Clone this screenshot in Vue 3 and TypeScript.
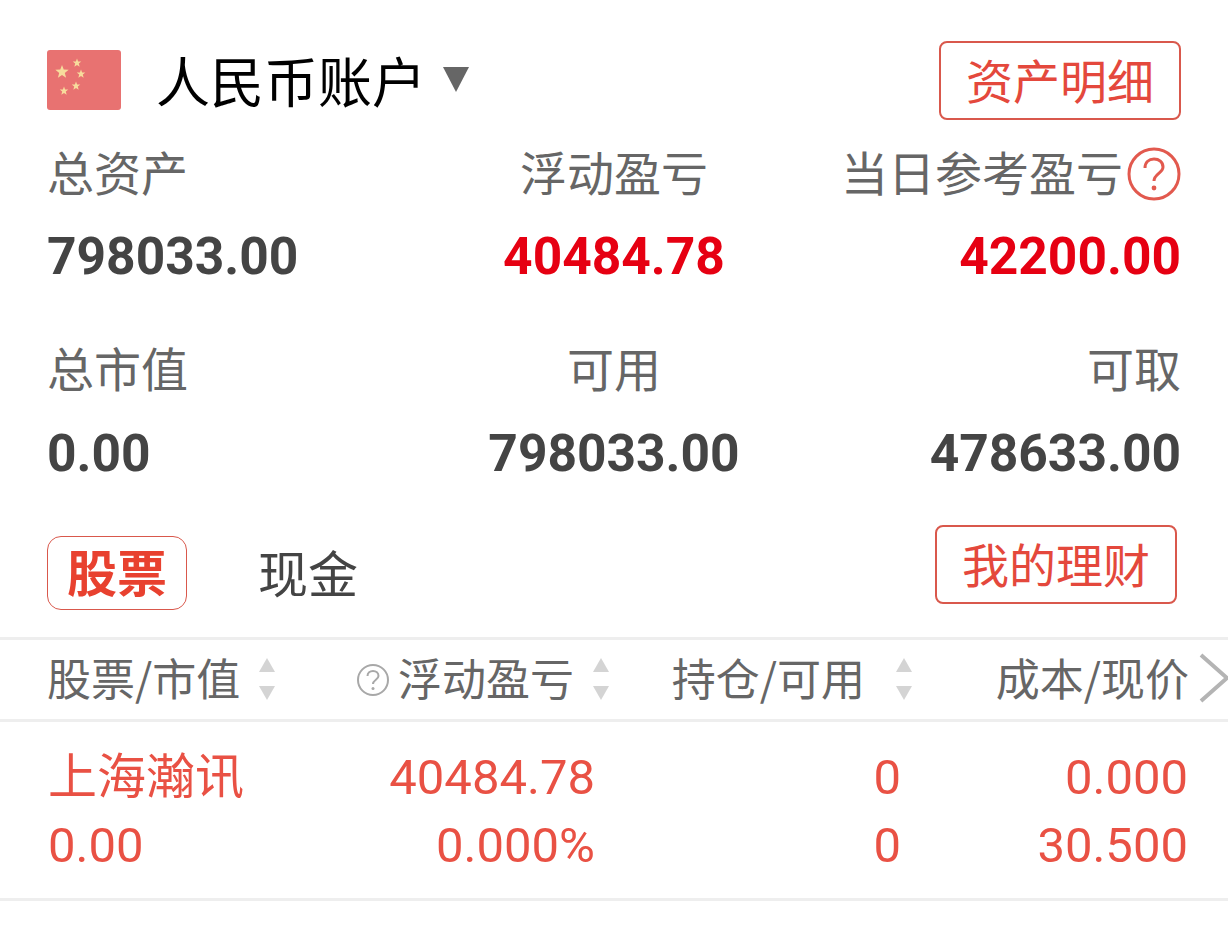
<script setup lang="ts">
const stars = [
  { x: 15, y: 22, r: 7 },
  { x: 30, y: 13, r: 4.5 },
  { x: 34, y: 24, r: 4.5 },
  { x: 29, y: 36, r: 4.5 },
  { x: 17, y: 41, r: 4.5 }
]

function starPoints(cx: number, cy: number, r: number): string {
  const pts: string[] = []
  for (let i = 0; i < 10; i++) {
    const rad = i % 2 === 0 ? r : r * 0.42
    const a = -Math.PI / 2 + (i * Math.PI) / 5
    pts.push(`${(cx + rad * Math.cos(a)).toFixed(2)},${(cy + rad * Math.sin(a)).toFixed(2)}`)
  }
  return pts.join(' ')
}

const summary = [
  { label: '总资产', value: '798033.00', align: 'left' },
  { label: '浮动盈亏', value: '40484.78', align: 'center', red: true },
  { label: '当日参考盈亏', value: '42200.00', align: 'right', red: true, help: true },
  { label: '总市值', value: '0.00', align: 'left' },
  { label: '可用', value: '798033.00', align: 'center' },
  { label: '可取', value: '478633.00', align: 'right' }
]

const columns = [
  { label: '股票/市值', sort: true },
  { label: '浮动盈亏', sort: true, help: true },
  { label: '持仓/可用', sort: true },
  { label: '成本/现价', sort: false }
]

const rows = [
  ['上海瀚讯', '40484.78', '0', '0.000'],
  ['0.00', '0.000%', '0', '30.500']
]
</script>

<template>
  <div class="page">
    <div class="account">
      <div class="account-left">
        <svg class="flag" width="74" height="60" viewBox="0 0 74 60">
          <rect width="74" height="60" rx="3" fill="#e87271" />
          <polygon v-for="(s, i) in stars" :key="i" :points="starPoints(s.x, s.y, s.r)" fill="#f7dc9c" />
        </svg>
        <span class="account-name">人民币账户</span>
        <svg class="caret" width="28" height="27" viewBox="0 0 28 27">
          <path d="M1 1H27L14 26Z" fill="#666" />
        </svg>
      </div>
      <a class="outline-btn">资产明细</a>
    </div>

    <div class="summary">
      <div v-for="item in summary" :key="item.label" class="cell" :class="item.align">
        <div class="cell-label">
          <span>{{ item.label }}</span>
          <svg v-if="item.help" class="help" width="54" height="54" viewBox="0 0 54 54">
            <circle cx="27" cy="27" r="25" fill="none" stroke="#e2594e" stroke-width="3" />
            <path d="M18 21C18 15 22 12 27 12C32 12 36 15 36 20C36 26 27 27 27 34" fill="none" stroke="#e2594e" stroke-width="3" />
            <circle cx="27" cy="41" r="2.4" fill="#e2594e" />
          </svg>
        </div>
        <div class="cell-value" :class="{ red: item.red }">{{ item.value }}</div>
      </div>
    </div>

    <div class="tabs">
      <div class="tab-list">
        <span class="tab active">股票</span>
        <span class="tab">现金</span>
      </div>
      <a class="outline-btn">我的理财</a>
    </div>

    <div class="table-head">
      <div v-for="col in columns" :key="col.label" class="head-cell">
        <svg v-if="col.help" class="help-small" width="34" height="34" viewBox="0 0 34 34">
          <circle cx="17" cy="17" r="15" fill="none" stroke="#a8a8a8" stroke-width="2" />
          <path d="M11.500 13C11.500 10 14 8 17 8C20 8 22.500 10 22.500 13C22.500 16.500 17 17 17 21" fill="none" stroke="#a8a8a8" stroke-width="2" />
          <circle cx="17" cy="25.500" r="1.500" fill="#a8a8a8" />
        </svg>
        <span>{{ col.label }}</span>
        <svg v-if="col.sort" class="sort" width="18" height="42" viewBox="0 0 18 42">
          <path d="M9 0L17 14H1Z" fill="#d4d4d4" />
          <path d="M1 28H17L9 42Z" fill="#d4d4d4" />
        </svg>
      </div>
      <svg class="more" width="30" height="50" viewBox="0 0 30 50">
        <path d="M2 2L28 25L2 48" fill="none" stroke="#b4b4b4" stroke-width="4" />
      </svg>
    </div>

    <div class="table-body">
      <div v-for="(row, i) in rows" :key="i" class="table-row">
        <span v-for="(text, j) in row" :key="j" class="table-cell">{{ text }}</span>
      </div>
    </div>
  </div>
</template>

<style>
html,
body {
  margin: 0;
  background: #fff;
}
</style>

<style scoped>
.page {
  width: 1228px;
  height: 928px;
  overflow: hidden;
  background: #fff;
  padding-top: 41px;
  box-sizing: border-box;
  font-family: "Noto Sans CJK SC", "Noto Sans", sans-serif;
}
.account {
  display: flex;
  justify-content: space-between;
  align-items: center;
  padding: 0 47px;
}
.account-left {
  display: flex;
  align-items: center;
}
.flag {
  margin-right: 35px;
  margin-top: -2px;
  filter: blur(0.4px);
}
.account-name {
  font-size: 54px;
  line-height: 79px;
  color: #000;
  margin-top: -2px;
}
.caret {
  margin-left: 16px;
  margin-top: -3px;
}
.outline-btn {
  width: 242px;
  height: 79px;
  box-sizing: border-box;
  display: flex;
  align-items: center;
  justify-content: center;
  padding-bottom: 5px;
  border: 2px solid #d9584c;
  border-radius: 8px;
  color: #e4483c;
  font-size: 47px;
}
.summary {
  display: grid;
  grid-template-columns: repeat(3, 1fr);
  padding: 14px 47px 0 47px;
  row-gap: 22px;
}
.cell {
  display: flex;
  flex-direction: column;
}
.cell.left {
  align-items: flex-start;
}
.cell.center {
  align-items: center;
}
.cell.right {
  align-items: flex-end;
}
.cell-label {
  display: flex;
  align-items: center;
  height: 72px;
  font-size: 47px;
  color: #666;
}
.help {
  margin-left: 4px;
  margin-top: 8px;
}
.cell-value {
  height: 100px;
  display: flex;
  align-items: center;
  font-family: Roboto, sans-serif;
  font-size: 51.5px;
  font-weight: 700;
  color: #444;
}
.cell-value.red {
  color: #e60012;
}
.summary .cell:nth-child(n + 4) .cell-value {
  height: 102px;
}
.summary {
  row-gap: 24px;
}
.tabs {
  display: flex;
  justify-content: space-between;
  align-items: flex-start;
  padding: 0 51px 0 47px;
  margin-top: 21px;
}
.tab-list {
  display: flex;
  align-items: flex-start;
  margin-top: 11px;
}
.tab {
  font-size: 50px;
  color: #444;
  line-height: 70px;
  margin-left: 71px;
}
.tab.active {
  width: 140px;
  height: 74px;
  box-sizing: border-box;
  margin-left: 0;
  display: flex;
  align-items: center;
  justify-content: center;
  padding-bottom: 6px;
  border: 1px solid #d9584c;
  border-radius: 14px;
  color: #e8412f;
  font-weight: 700;
}
.table-head {
  display: grid;
  grid-template-columns: 241px 322px 303px 276px 40px;
  align-items: center;
  box-sizing: border-box;
  height: 85px;
  padding-left: 47px;
  padding-bottom: 6px;
  margin-top: 27px;
  border-top: 3px solid #eee;
  border-bottom: 3px solid #eee;
  color: #666;
  font-size: 44px;
  line-height: 54px;
}
.head-cell {
  display: flex;
  align-items: center;
  justify-content: flex-end;
}
.head-cell:first-child {
  justify-content: flex-start;
}
.sort {
  margin-left: 18px;
  margin-top: 4px;
}
.head-cell:nth-child(3) .sort {
  margin-left: 30px;
}
.help-small {
  margin-right: 8px;
  margin-top: 6px;
}
.more {
  margin-left: 10px;
  margin-top: 2px;
}
.table-body {
  border-bottom: 3px solid #eee;
  padding: 22px 0 18px 48px;
}
.table-row {
  display: grid;
  grid-template-columns: 241px 306px 306px 287px;
  height: 68px;
  align-items: center;
  color: #e95144;
  font-family: Roboto, "Noto Sans CJK SC", sans-serif;
  font-size: 49px;
  line-height: 54px;
}
.table-cell {
  text-align: right;
  white-space: nowrap;
}
.table-cell:first-child {
  text-align: left;
}
</style>
